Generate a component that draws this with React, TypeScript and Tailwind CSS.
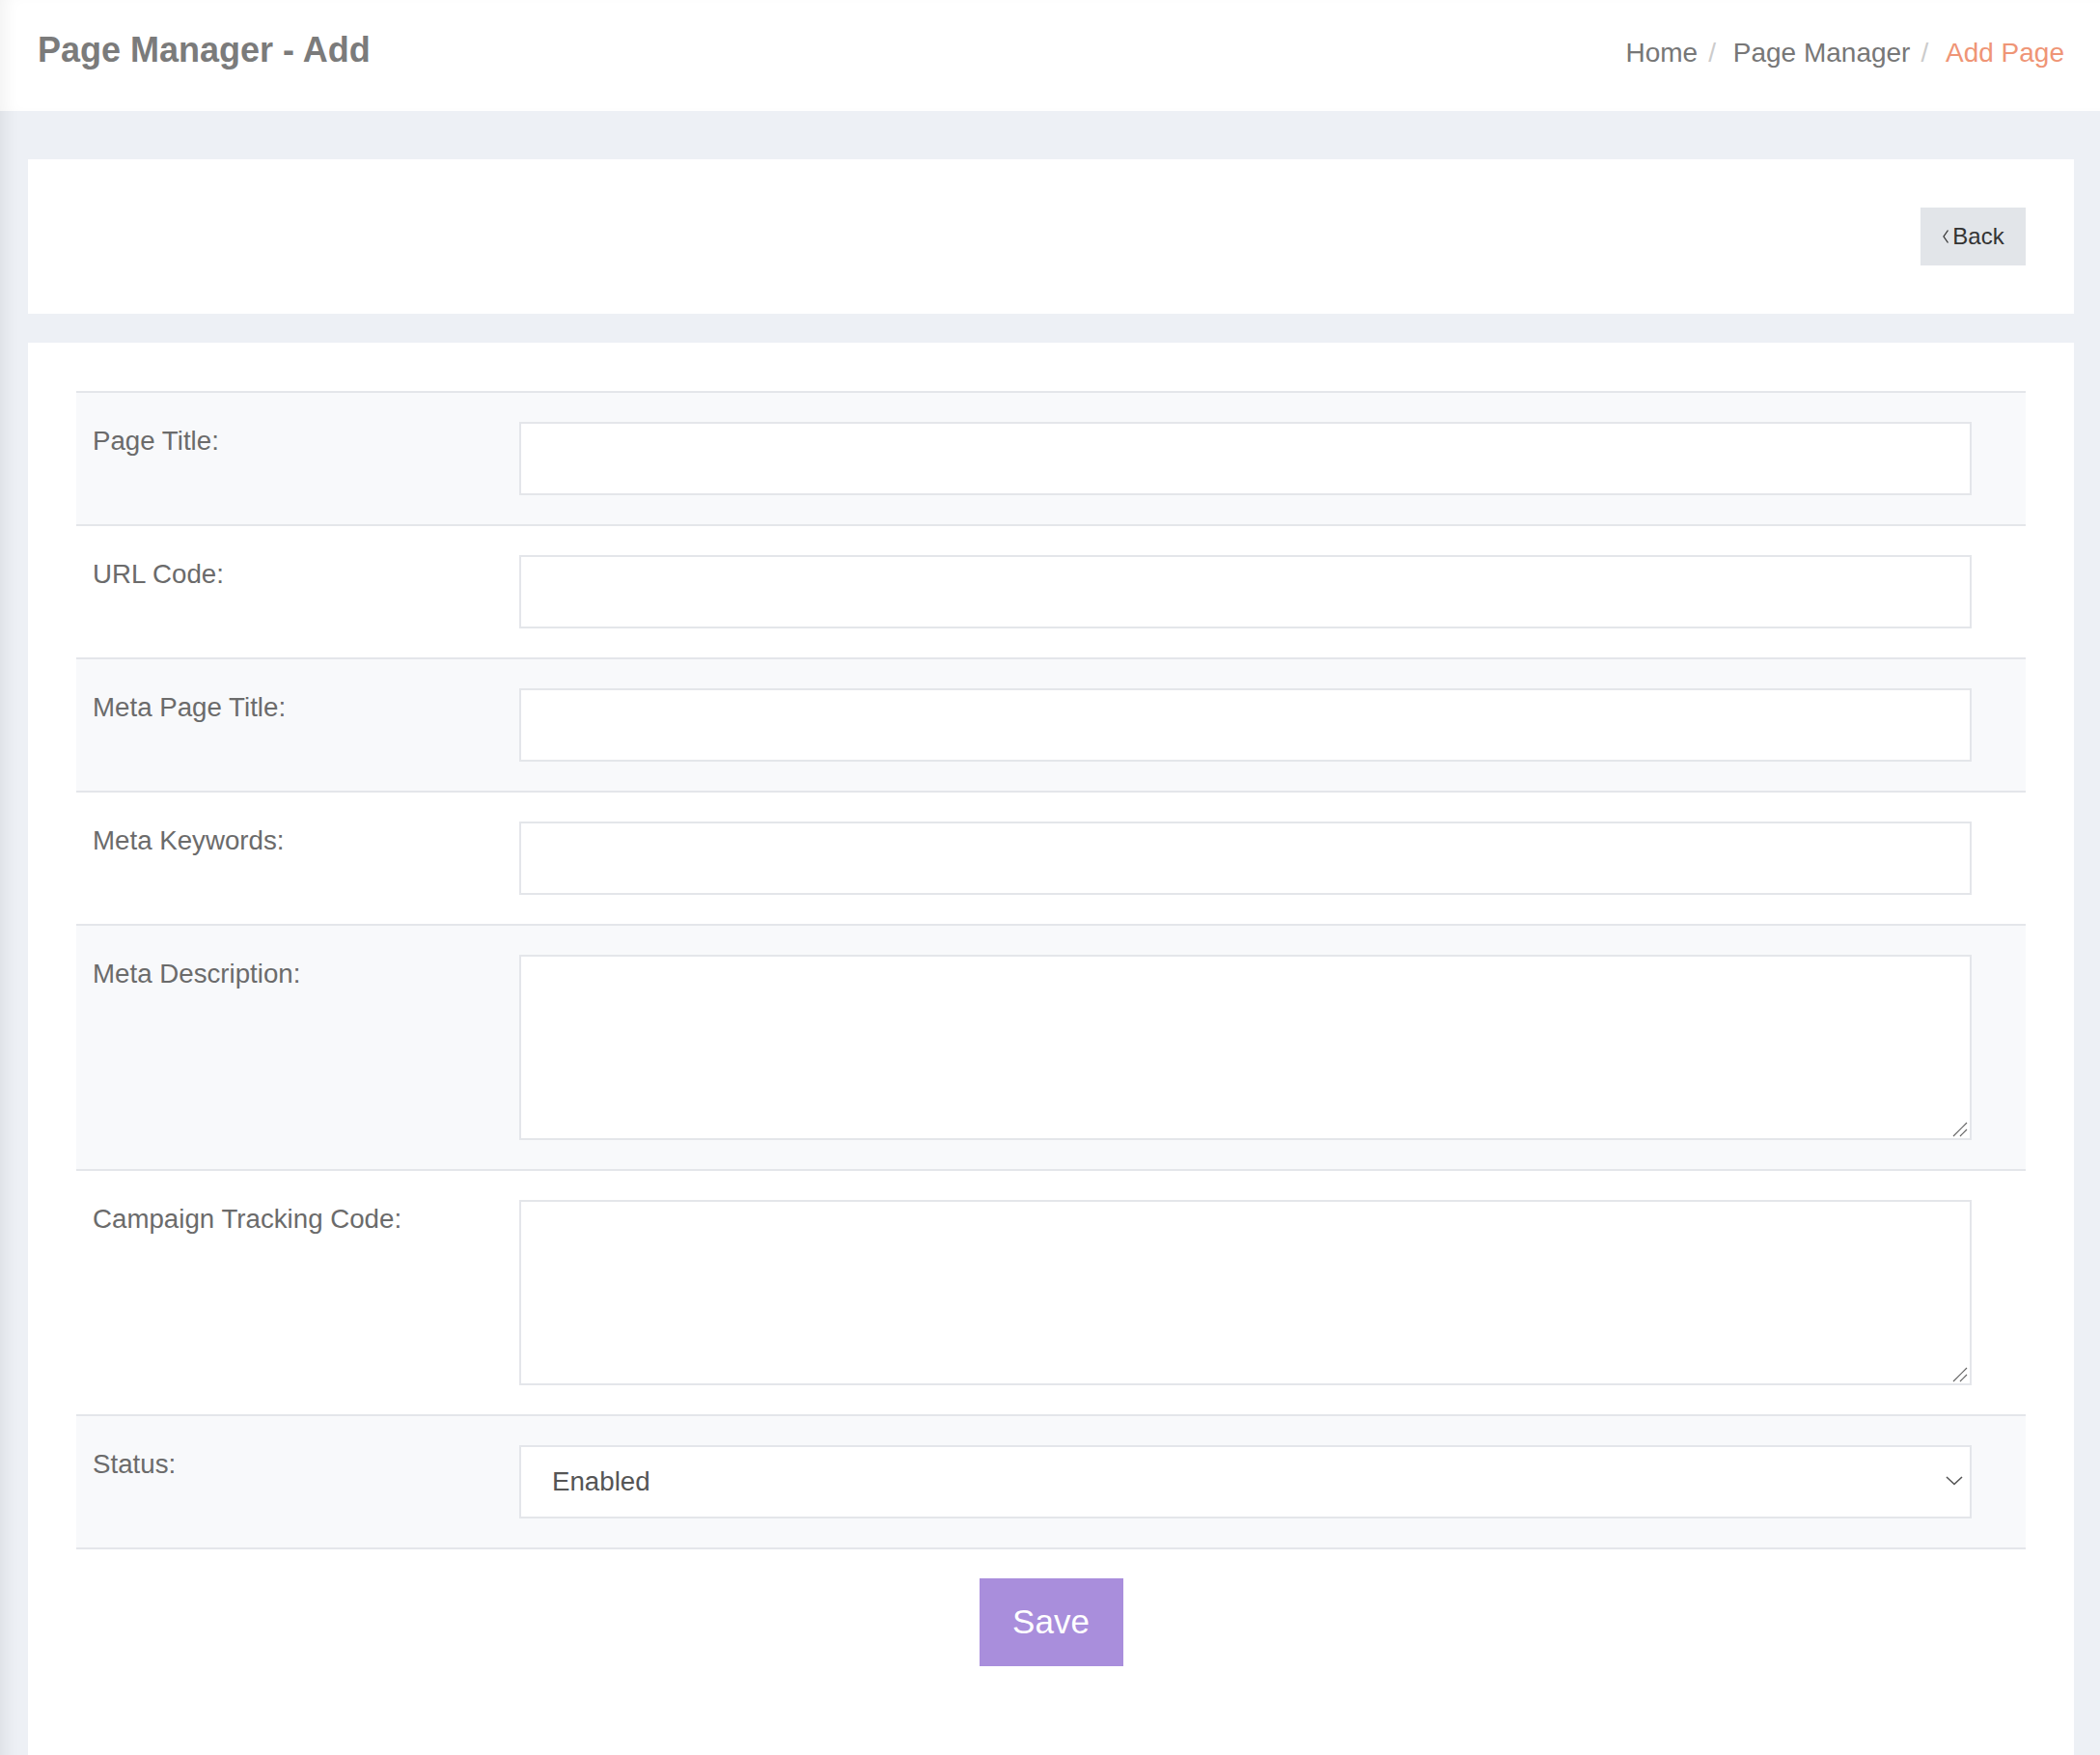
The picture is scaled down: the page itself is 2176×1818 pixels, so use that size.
const fields = [
  { label: "Page Title:", kind: "input" },
  { label: "URL Code:", kind: "input" },
  { label: "Meta Page Title:", kind: "input" },
  { label: "Meta Keywords:", kind: "input" },
  { label: "Meta Description:", kind: "textarea" },
  { label: "Campaign Tracking Code:", kind: "textarea" },
  { label: "Status:", kind: "select" },
];

export default function App() {
  return (
    <div
      className="min-h-screen bg-[#edf0f5] text-[#666] shadow-[inset_14px_0_18px_-10px_rgba(0,0,0,0.08)]"
      style={{ fontFamily: '"Liberation Sans", Arial, sans-serif' }}
    >
      {/* Header */}
      <div className="flex h-[115px] items-start justify-between bg-white pl-[39px] pr-[37px] shadow-[inset_14px_0_18px_-10px_rgba(0,0,0,0.06)]">
        <h1 className="pt-[30px] text-[36px] font-bold leading-[44px] text-[#7b7b7b]">Page Manager - Add</h1>
        <nav className="flex pt-[35px] text-[28px] leading-[40px] text-[#777]">
          <span>Home</span>
          <span className="pl-[11px] pr-[10px] text-[#ccc]">/&nbsp;</span>
          <span>Page Manager</span>
          <span className="pl-[11px] pr-[10px] text-[#ccc]">/&nbsp;</span>
          <span className="text-[#ef9576]">Add Page</span>
        </nav>
      </div>

      <div className="flex flex-col gap-[30px] pl-[29px] pr-[27px] pt-[50px]">
        {/* Toolbar card */}
        <div className="flex justify-end bg-white p-[50px]">
          <button className="flex h-[60px] w-[109px] items-center justify-center bg-[#e2e5e9] text-[24px] text-[#333]">
            <svg width="8" height="16" viewBox="0 0 8 16" fill="none" stroke="#333" strokeWidth="1.3">
              <path d="M6.5 1.5 L2 8 L6.5 14.5" />
            </svg>
            <span className="ml-[3px]">Back</span>
          </button>
        </div>

        {/* Form card */}
        <div className="bg-white px-[50px] pt-[50px] pb-[140px]">
          <div className="border-b-2 border-[#e4e6ea]">
            {fields.map((f, i) => (
              <div
                key={f.label}
                className={`flex border-t-2 border-[#e4e6ea] py-[30px] ${i % 2 === 0 ? "bg-[#f8f9fb]" : "bg-white"}`}
              >
                <label className="w-[443px] shrink-0 pl-[17px] text-[27.7px] leading-[40px] text-[#6b6b6b]">
                  {f.label}
                </label>
                <div className="flex-1 pl-[16px] pr-[56px]">
                  {f.kind === "input" && (
                    <input type="text" className="block h-[76px] w-full border-2 border-[#e4e6ea] bg-white outline-none" />
                  )}
                  {f.kind === "textarea" && (
                    <div className="relative">
                      <textarea className="block h-[192px] w-full resize-none border-2 border-[#e4e6ea] bg-white outline-none" />
                      <svg
                        className="pointer-events-none absolute bottom-[3px] right-[4px]"
                        width="16"
                        height="16"
                        viewBox="0 0 16 16"
                        fill="none"
                        stroke="#666"
                        strokeWidth="1.2"
                      >
                        <path d="M1 15 L15 1 M8 15 L15 8" />
                      </svg>
                    </div>
                  )}
                  {f.kind === "select" && (
                    <div className="relative">
                      <select className="block h-[76px] w-full appearance-none border-2 border-[#e4e6ea] bg-white pl-[32px] text-[27.7px] text-[#555] outline-none">
                        <option>Enabled</option>
                        <option>Disabled</option>
                      </select>
                      <svg
                        className="pointer-events-none absolute right-[9px] top-[32px]"
                        width="18"
                        height="10"
                        viewBox="0 0 18 10"
                        fill="none"
                        stroke="#555"
                        strokeWidth="1.6"
                      >
                        <path d="M1 1 L9 8.5 L17 1" />
                      </svg>
                    </div>
                  )}
                </div>
              </div>
            ))}
          </div>

          <div className="flex justify-center pt-[30px]">
            <button className="h-[91px] w-[149px] bg-[#a98edc] text-[35px] text-white">Save</button>
          </div>
        </div>
      </div>
    </div>
  );
}
